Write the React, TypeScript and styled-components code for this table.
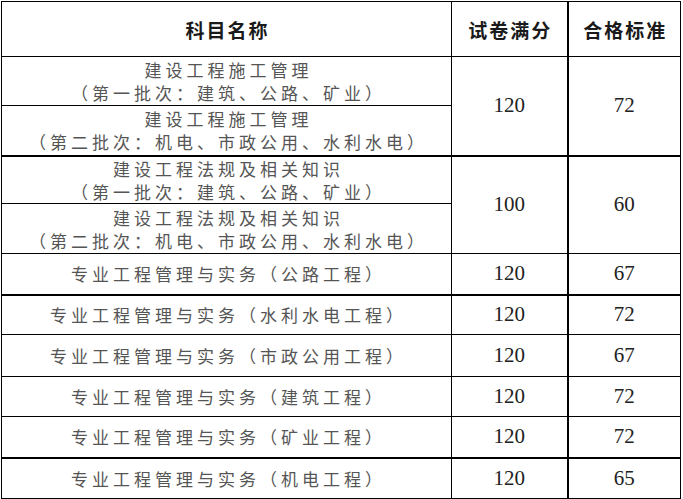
import React from 'react';
import styled, { createGlobalStyle } from 'styled-components';

// ----------------------------------------------------------------------

const GlobalStyle = createGlobalStyle`
  html, body {
    margin: 0;
    padding: 0;
    background: #ffffff;
  }
  body {
    font-family: "Noto Sans CJK SC", "Noto Sans", sans-serif;
  }
`;

const Page = styled.div`
  width: 683px;
  height: 499px;
  overflow: hidden;
  padding: 1px 0 0 1px;
  box-sizing: border-box;
`;

const Table = styled.table`
  border-collapse: collapse;
  table-layout: fixed;
  width: 679px;
`;

const Col = styled.col<{ $w: number }>`
  width: ${({ $w }) => $w}px;
`;

const Row = styled.tr<{ $h: number; $thick?: boolean }>`
  height: ${({ $h }) => $h}px;
  & > td {
    border-top: ${({ $thick }) => ($thick ? '2px' : '1px')} solid #000;
  }
`;

const HeadCell = styled.th<{ $strong?: boolean }>`
  border: 1px solid #000;
  border-right-width: ${({ $strong }) => ($strong ? '2px' : '1px')};
  padding: 0 0 0 2px;
  font-family: "Noto Sans CJK SC", sans-serif;
  font-weight: 700;
  font-size: 19px;
  letter-spacing: 2px;
  color: #1a1a1a;
  text-align: center;
  vertical-align: middle;
`;

const NameCell = styled.td`
  border: 1px solid #000;
  padding: 0 0 0 4px;
  font-family: "Noto Sans CJK SC", sans-serif;
  font-size: 17px;
  line-height: 23px;
  letter-spacing: 4px;
  color: #555;
  text-align: center;
  vertical-align: middle;
  white-space: nowrap;
`;

const ScoreCell = styled.td<{ $strong?: boolean }>`
  border: 1px solid #000;
  border-right-width: ${({ $strong }) => ($strong ? '2px' : '1px')};
  padding: 0;
  font-family: "Liberation Serif", serif;
  font-size: 21px;
  color: #222;
  text-align: center;
  vertical-align: middle;
`;

interface BatchGroup {
  title: string;
  full: number;
  pass: number;
}

const batches: BatchGroup[] = [
  { title: '建设工程施工管理', full: 120, pass: 72 },
  { title: '建设工程法规及相关知识', full: 100, pass: 60 },
];

const practice = [
  { name: '公路工程', full: 120, pass: 67, thick: false, h: 41 },
  { name: '水利水电工程', full: 120, pass: 72, thick: true, h: 40 },
  { name: '市政公用工程', full: 120, pass: 67, thick: false, h: 42 },
  { name: '建筑工程', full: 120, pass: 72, thick: false, h: 40 },
  { name: '矿业工程', full: 120, pass: 72, thick: false, h: 41 },
  { name: '机电工程', full: 120, pass: 65, thick: true, h: 41 },
];

export default function App() {
  return (
    <>
      <GlobalStyle />
      <Page>
        <Table>
          <colgroup>
            <Col $w={450} />
            <Col $w={116} />
            <Col $w={113} />
          </colgroup>
          <thead>
            <tr style={{ height: 55 }}>
              <HeadCell>科目名称</HeadCell>
              <HeadCell $strong>试卷满分</HeadCell>
              <HeadCell>合格标准</HeadCell>
            </tr>
          </thead>
          <tbody>
            {batches.map((b, i) => (
              <React.Fragment key={b.title}>
                <Row $h={i > 0 ? 48 : 49} $thick={i > 0}>
                  <NameCell>
                    {b.title}
                    <br />
                    （第一批次：建筑、公路、矿业）
                  </NameCell>
                  <ScoreCell rowSpan={2} $strong>{b.full}</ScoreCell>
                  <ScoreCell rowSpan={2}>{b.pass}</ScoreCell>
                </Row>
                <Row $h={50}>
                  <NameCell>
                    {b.title}
                    <br />
                    （第二批次：机电、市政公用、水利水电）
                  </NameCell>
                </Row>
              </React.Fragment>
            ))}
            {practice.map((p) => (
              <Row key={p.name} $h={p.h} $thick={p.thick}>
                <NameCell>专业工程管理与实务（{p.name}）</NameCell>
                <ScoreCell $strong>{p.full}</ScoreCell>
                <ScoreCell>{p.pass}</ScoreCell>
              </Row>
            ))}
          </tbody>
        </Table>
      </Page>
    </>
  );
}
